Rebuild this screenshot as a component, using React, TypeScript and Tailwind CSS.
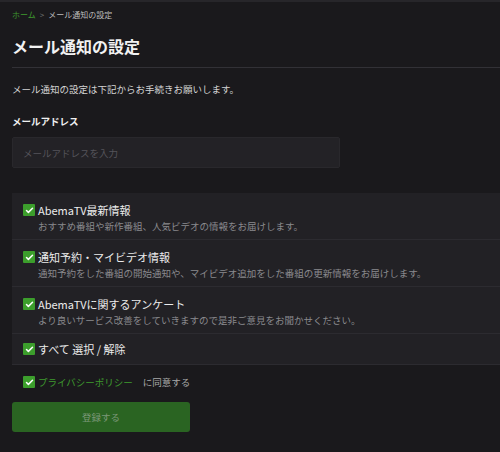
import { Check } from "lucide-react";

const font = { fontFamily: '"Noto Sans CJK JP", "Noto Sans", sans-serif' };

const options = [
  {
    title: "AbemaTV最新情報",
    desc: "おすすめ番組や新作番組、人気ビデオの情報をお届けします。",
  },
  {
    title: "通知予約・マイビデオ情報",
    desc: "通知予約をした番組の開始通知や、マイビデオ追加をした番組の更新情報をお届けします。",
  },
  {
    title: "AbemaTVに関するアンケート",
    desc: "より良いサービス改善をしていきますので是非ご意見をお聞かせください。",
  },
];

function Box() {
  return (
    <span className="flex h-3 w-3 shrink-0 items-center justify-center rounded-[1px] bg-[#3c9e2c]">
      <Check className="h-[9px] w-[9px] text-white" strokeWidth={4} />
    </span>
  );
}

export default function App() {
  return (
    <div
      className="h-[452px] w-[500px] overflow-hidden border-t-2 border-[#27262a] bg-[#1a191c] pl-3"
      style={font}
    >
      <div className="flex h-[26px] items-center text-[8px] text-[#bdbdbd]">
        <span className="text-[#3e9a2e]">ホーム</span>
        <span className="mx-[4px] text-[#777]">&gt;</span>
        <span>メール通知の設定</span>
      </div>

      <div className="flex h-9 items-center text-[16px] font-bold text-[#f2f2f2]">
        メール通知の設定
      </div>

      <div className="mt-[3px] border-t border-[#323136]" />

      <p className="mt-3 flex h-[18px] items-center text-[9.5px] text-[#d4d4d4]">
        メール通知の設定は下記からお手続きお願いします。
      </p>

      <div className="mt-[14px] flex h-[18px] items-center text-[9.5px] font-bold text-[#f0f0f0]">
        メールアドレス
      </div>

      <input
        placeholder="メールアドレスを入力"
        className="mt-[7px] h-[31px] w-[328px] rounded-[2px] border border-[#29282c] bg-[#232226] px-[10px] text-[9.5px] text-[#ddd] outline-none placeholder:text-[#55545a]"
        style={font}
      />

      <div className="mt-[25px] flex flex-col">
        {options.map((o) => (
          <div
            key={o.title}
            className="flex h-[47px] gap-[3px] border-b border-[#2c2b30] bg-[#222125] pl-[11px] pt-[10px]"
          >
            <div className="pt-[1px]">
              <Box />
            </div>
            <div className="flex flex-col">
              <span className="flex h-[14px] items-center text-[11px] text-[#ececec]">
                {o.title}
              </span>
              <span className="mt-[2px] flex h-[14px] items-center text-[9.5px] text-[#8a8a8e]">
                {o.desc}
              </span>
            </div>
          </div>
        ))}
        <div className="flex h-[31px] items-center gap-[3px] border-b border-[#2c2b30] bg-[#222125] pl-[11px]">
          <Box />
          <span className="text-[11px] text-[#ececec]">すべて 選択 / 解除</span>
        </div>
      </div>

      <div className="ml-[11px] mt-[9px] flex h-4 items-center gap-[3px] text-[9.5px]">
        <Box />
        <span className="text-[#3e9a2e]">プライバシーポリシー</span>
        <span className="ml-[7px] text-[#a9a9a9]">に同意する</span>
      </div>

      <button
        className="mt-[12px] flex h-[30px] w-[178px] items-center justify-center rounded-[3px] bg-[#2a6422] text-[9.5px] text-[#7d9879]"
        style={font}
      >
        登録する
      </button>
    </div>
  );
}
